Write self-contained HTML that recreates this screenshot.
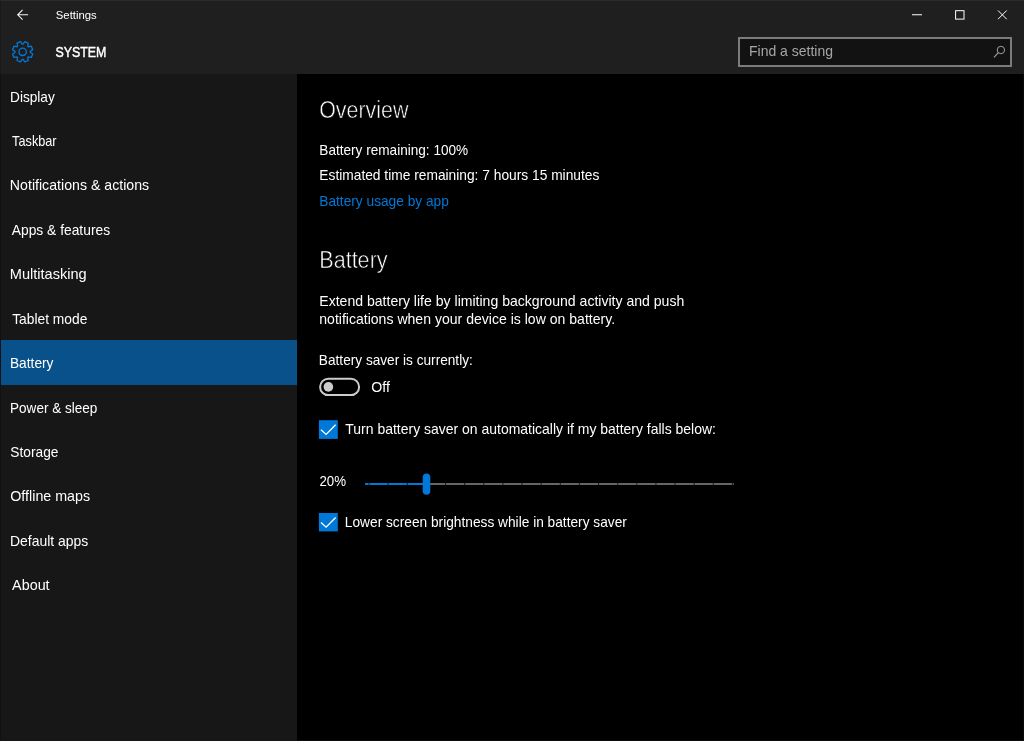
<!DOCTYPE html>
<html><head><meta charset="utf-8"><title>Settings</title>
<style>
html,body{margin:0;padding:0;background:#000;}
body{width:1024px;height:741px;position:relative;overflow:hidden;font-family:"Liberation Sans",sans-serif;}
.abs{position:absolute;}
.t{position:absolute;left:0;top:0;white-space:nowrap;margin:0;padding:0;transform-origin:0 0;}
#header{left:0;top:0;width:1024px;height:74px;background:#1f1f1f;}
#topline{left:0;top:0;width:1024px;height:1px;background:#2b2b2b;}
#sidebar{left:0;top:74px;width:297px;height:667px;background:#171717;}
#sel{left:1px;top:340.3px;width:296px;height:44.7px;background:#09518b;}
#content{left:297px;top:74px;width:727px;height:667px;background:#000;}
#search{left:738px;top:37px;width:270px;height:25.7px;border:2px solid #7c7c7c;background:#121212;}
svg{position:absolute;left:0;top:0;overflow:visible;}
</style></head><body>
<div class="abs" id="header"></div>
<div class="abs" id="topline"></div>
<div class="abs" id="sidebar"></div>
<div class="abs" id="sel"></div>
<div class="abs" id="content"></div>
<div class="abs" id="search"></div>
<div class="abs" style="left:0;top:0;width:1px;height:741px;background:rgba(0,0,0,0.18)"></div>
<div class="abs" style="left:1023px;top:0;width:1px;height:741px;background:rgba(255,255,255,0.04)"></div>
<div class="abs" style="left:1023px;top:0;width:1px;height:74px;background:rgba(0,0,0,0.2)"></div>
<div class="abs" style="left:297px;top:740px;width:727px;height:1px;background:rgba(255,255,255,0.05)"></div>
<div id="texts" style="position:absolute;left:0;top:0;width:1024px;height:741px;will-change:transform">
<div class="t" id="title" style="font-size:11.7px;line-height:19px;letter-spacing:0.000px;color:#fff;font-weight:400;transform:translate(55.81px,5px) scaleX(0.9701);">Settings</div>
<div class="t" id="system" style="font-size:15.2px;line-height:24px;letter-spacing:0.000px;color:#fff;font-weight:400;transform:translate(55.53px,40px) scaleX(0.8150);-webkit-text-stroke:0.45px #fff;">SYSTEM</div>
<div class="t" id="find" style="font-size:14.6px;line-height:23px;letter-spacing:0.000px;color:#a6a6a6;font-weight:400;transform:translate(749.02px,40px) scaleX(0.9583);">Find a setting</div>
<div class="t" id="s0" style="font-size:14.6px;line-height:23px;letter-spacing:0.000px;color:#fff;font-weight:400;transform:translate(10.02px,86px) scaleX(0.9357);">Display</div>
<div class="t" id="s1" style="font-size:14.6px;line-height:23px;letter-spacing:0.000px;color:#fff;font-weight:400;transform:translate(12.11px,130px) scaleX(0.8707);">Taskbar</div>
<div class="t" id="s2" style="font-size:14.6px;line-height:23px;letter-spacing:0.000px;color:#fff;font-weight:400;transform:translate(9.85px,174px) scaleX(0.9701);">Notifications &amp; actions</div>
<div class="t" id="s3" style="font-size:14.6px;line-height:23px;letter-spacing:0.000px;color:#fff;font-weight:400;transform:translate(11.73px,219px) scaleX(0.9473);">Apps &amp; features</div>
<div class="t" id="s4" style="font-size:14.6px;line-height:23px;letter-spacing:0.000px;color:#fff;font-weight:400;transform:translate(9.82px,263px) scaleX(0.9981);">Multitasking</div>
<div class="t" id="s5" style="font-size:14.6px;line-height:23px;letter-spacing:0.000px;color:#fff;font-weight:400;transform:translate(12.14px,308px) scaleX(0.9455);">Tablet mode</div>
<div class="t" id="s6" style="font-size:14.6px;line-height:23px;letter-spacing:0.000px;color:#fff;font-weight:400;transform:translate(9.97px,352px) scaleX(0.9403);">Battery</div>
<div class="t" id="s7" style="font-size:14.6px;line-height:23px;letter-spacing:0.000px;color:#fff;font-weight:400;transform:translate(10.04px,397px) scaleX(0.9280);">Power &amp; sleep</div>
<div class="t" id="s8" style="font-size:14.6px;line-height:23px;letter-spacing:0.000px;color:#fff;font-weight:400;transform:translate(10.32px,441px) scaleX(0.9415);">Storage</div>
<div class="t" id="s9" style="font-size:14.6px;line-height:23px;letter-spacing:0.000px;color:#fff;font-weight:400;transform:translate(10.28px,485px) scaleX(0.9773);">Offline maps</div>
<div class="t" id="s10" style="font-size:14.6px;line-height:23px;letter-spacing:0.000px;color:#fff;font-weight:400;transform:translate(9.98px,530px) scaleX(0.9560);">Default apps</div>
<div class="t" id="s11" style="font-size:14.6px;line-height:23px;letter-spacing:0.000px;color:#fff;font-weight:400;transform:translate(12.11px,574px) scaleX(0.9830);">About</div>
<div class="t" id="h1" style="font-size:23.3px;line-height:37px;letter-spacing:0.000px;color:#ffffff;font-weight:400;transform:translate(319.17px,92px) scaleX(0.9189);-webkit-text-stroke:0.55px #000;">Overview</div>
<div class="t" id="c1" style="font-size:14.6px;line-height:23px;letter-spacing:0.000px;color:#fff;font-weight:400;transform:translate(319.34px,139px) scaleX(0.9312);">Battery remaining: 100%</div>
<div class="t" id="c2" style="font-size:14.6px;line-height:23px;letter-spacing:0.000px;color:#fff;font-weight:400;transform:translate(319.32px,164px) scaleX(0.9432);">Estimated time remaining: 7 hours 15 minutes</div>
<div class="t" id="c3" style="font-size:14.6px;line-height:23px;letter-spacing:0.000px;color:#0078d7;font-weight:400;transform:translate(319.24px,190px) scaleX(0.9399);">Battery usage by app</div>
<div class="t" id="h2" style="font-size:23.3px;line-height:37px;letter-spacing:0.000px;color:#ffffff;font-weight:400;transform:translate(319.23px,242px) scaleX(0.9265);-webkit-text-stroke:0.55px #000;">Battery</div>
<div class="t" id="p1" style="font-size:14.6px;line-height:23px;letter-spacing:0.000px;color:#fff;font-weight:400;transform:translate(319.29px,290px) scaleX(0.9635);">Extend battery life by limiting background activity and push</div>
<div class="t" id="p2" style="font-size:14.6px;line-height:23px;letter-spacing:0.000px;color:#fff;font-weight:400;transform:translate(319.24px,308px) scaleX(0.9632);">notifications when your device is low on battery.</div>
<div class="t" id="c4" style="font-size:14.6px;line-height:23px;letter-spacing:0.000px;color:#fff;font-weight:400;transform:translate(318.86px,349px) scaleX(0.9350);">Battery saver is currently:</div>
<div class="t" id="off" style="font-size:14.6px;line-height:23px;letter-spacing:0.000px;color:#fff;font-weight:400;transform:translate(371.26px,376px) scaleX(0.9691);">Off</div>
<div class="t" id="k1" style="font-size:14.6px;line-height:23px;letter-spacing:0.000px;color:#fff;font-weight:400;transform:translate(345.33px,418px) scaleX(0.9573);">Turn battery saver on automatically if my battery falls below:</div>
<div class="t" id="pct" style="font-size:14.6px;line-height:23px;letter-spacing:0.000px;color:#fff;font-weight:400;transform:translate(319.47px,470px) scaleX(0.9105);">20%</div>
<div class="t" id="k2" style="font-size:14.6px;line-height:23px;letter-spacing:0.000px;color:#fff;font-weight:400;transform:translate(344.85px,511px) scaleX(0.9397);">Lower screen brightness while in battery saver</div>
</div>
<svg width="1024" height="741" viewBox="0 0 1024 741">
<!-- back arrow -->
<path d="M28.1 14.8H17.7M22.6 9.9L17.7 14.8L22.6 19.7" fill="none" stroke="#f2f2f2" stroke-width="1.1"/>
<!-- window controls -->
<path d="M912 14.75H922" stroke="#fff" stroke-width="1" fill="none"/>
<rect x="955.6" y="10.7" width="8.4" height="8.4" fill="none" stroke="#fff" stroke-width="1"/>
<path d="M998 10.5L1006.7 19.2M1006.7 10.5L998 19.2" stroke="#fff" stroke-width="1" fill="none"/>
<!-- magnifier -->
<circle cx="1000.9" cy="50" r="3.7" fill="none" stroke="#a0a0a0" stroke-width="1"/>
<path d="M998.3 52.7L994 57.3" stroke="#a0a0a0" stroke-width="1.15" fill="none"/>
<!-- gear -->
<path d="M24.78 41.68L28.27 43.12L27.67 46.11L28.32 46.76L31.31 46.16L32.75 49.65L30.22 51.34L30.22 52.26L32.75 53.95L31.31 57.44L28.32 56.84L27.67 57.49L28.27 60.48L24.78 61.92L23.09 59.39L22.17 59.39L20.48 61.92L16.99 60.48L17.59 57.49L16.94 56.84L13.95 57.44L12.51 53.95L15.04 52.26L15.04 51.34L12.51 49.65L13.95 46.16L16.94 46.76L17.59 46.11L16.99 43.12L20.48 41.68L22.17 44.21L23.09 44.21Z" fill="none" stroke="#0078d7" stroke-width="1.3" stroke-linejoin="round"/>
<circle cx="22.63" cy="51.8" r="3.7" fill="none" stroke="#0078d7" stroke-width="1.3"/>
<!-- toggle -->
<rect x="320.1" y="378.7" width="39" height="16.4" rx="8.2" fill="none" stroke="#ccc" stroke-width="2"/>
<circle cx="328.4" cy="386.9" r="4.8" fill="#ccc"/>
<!-- checkboxes -->
<rect x="318.9" y="420.2" width="18.9" height="18.7" fill="#0078d7"/>
<path d="M321.0 429.7L326.1 434.4L335.6 424.7" fill="none" stroke="#fff" stroke-width="1.3"/>
<rect x="318.9" y="513" width="18.9" height="18.4" fill="#0078d7"/>
<path d="M321.0 522.5L326.1 527.2L335.6 517.5" fill="none" stroke="#fff" stroke-width="1.3"/>
<!-- slider -->
<rect x="365.3" y="483" width="368.5" height="2" fill="#666"/>
<rect x="365.3" y="483" width="61" height="2" fill="#0078d7"/>
<g id="ticks"><rect x="368.50" y="482.5" width="1" height="3" fill="#000" opacity="0.75"/><rect x="387.63" y="482.5" width="1" height="3" fill="#000" opacity="0.75"/><rect x="406.76" y="482.5" width="1" height="3" fill="#000" opacity="0.75"/><rect x="425.89" y="482.5" width="1" height="3" fill="#000" opacity="0.75"/><rect x="445.02" y="482.5" width="1" height="3" fill="#000" opacity="0.75"/><rect x="464.15" y="482.5" width="1" height="3" fill="#000" opacity="0.75"/><rect x="483.28" y="482.5" width="1" height="3" fill="#000" opacity="0.75"/><rect x="502.41" y="482.5" width="1" height="3" fill="#000" opacity="0.75"/><rect x="521.54" y="482.5" width="1" height="3" fill="#000" opacity="0.75"/><rect x="540.67" y="482.5" width="1" height="3" fill="#000" opacity="0.75"/><rect x="559.80" y="482.5" width="1" height="3" fill="#000" opacity="0.75"/><rect x="578.93" y="482.5" width="1" height="3" fill="#000" opacity="0.75"/><rect x="598.06" y="482.5" width="1" height="3" fill="#000" opacity="0.75"/><rect x="617.19" y="482.5" width="1" height="3" fill="#000" opacity="0.75"/><rect x="636.32" y="482.5" width="1" height="3" fill="#000" opacity="0.75"/><rect x="655.45" y="482.5" width="1" height="3" fill="#000" opacity="0.75"/><rect x="674.58" y="482.5" width="1" height="3" fill="#000" opacity="0.75"/><rect x="693.71" y="482.5" width="1" height="3" fill="#000" opacity="0.75"/><rect x="712.84" y="482.5" width="1" height="3" fill="#000" opacity="0.75"/><rect x="731.97" y="482.5" width="1" height="3" fill="#000" opacity="0.75"/></g>
<rect x="422.7" y="473.4" width="7.6" height="21.4" rx="3.8" fill="#0078d7"/>
</svg>
</body></html>
